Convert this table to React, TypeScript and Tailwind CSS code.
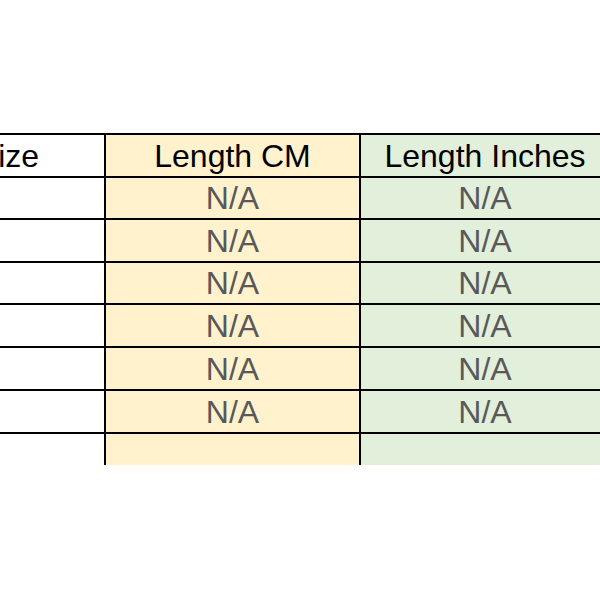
import React from 'react'

const rowHeights = ['h-[42px]', 'h-[43px]', 'h-[42px]', 'h-[43px]', 'h-[43px]', 'h-[43px]']

const App = () => {
  return (
    <div className="w-[600px] h-[600px] overflow-hidden bg-white font-['Liberation_Sans',Arial,sans-serif]">
      <div className="pt-[133px] -ml-[88px] w-[700px]">
        {/* header */}
        <div className="flex h-[43px] border-t-2 border-black">
          <div className="w-[192px] flex items-center justify-center text-[32px] leading-none text-black">Size</div>
          <div className="w-[255px] border-l-2 border-black bg-[#fff2cc] flex items-center justify-center text-[32px] leading-none text-black">
            Length CM
          </div>
          <div className="w-[250px] border-l-2 border-black bg-[#e2efda] flex items-center justify-center text-[32px] leading-none text-black">
            Length Inches
          </div>
        </div>

        {rowHeights.map((h, i) => (
          <div key={i} className={`flex ${h} border-t-2 border-black`}>
            <div className="w-[192px]" />
            <div className="w-[255px] border-l-2 border-black bg-[#fff2cc] flex items-center justify-center text-[32px] leading-none text-[#595959]">
              N/A
            </div>
            <div className="w-[250px] border-l-2 border-black bg-[#e2efda] flex items-center justify-center text-[32px] leading-none text-[#595959]">
              N/A
            </div>
          </div>
        ))}

        {/* empty last row, no bottom line */}
        <div className="flex h-[33px] border-t-2 border-black">
          <div className="w-[192px]" />
          <div className="w-[255px] border-l-2 border-black bg-[#fff2cc]" />
          <div className="w-[250px] border-l-2 border-black bg-[#e2efda]" />
        </div>
      </div>
    </div>
  )
}

export default App
